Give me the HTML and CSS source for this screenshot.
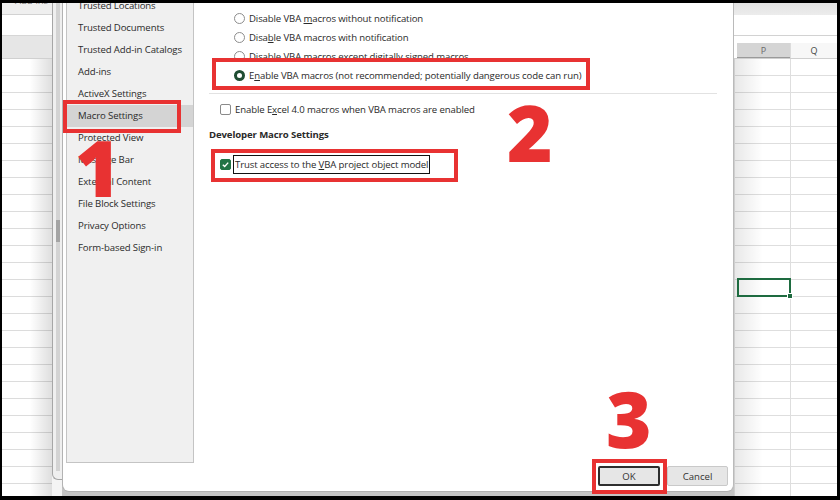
FILE: index.html
```html
<!DOCTYPE html>
<html lang="en">
<head>
    <meta charset="UTF-8">
    <title>Trust Center - Macro Settings</title>
    <link rel="stylesheet" href="styles.css">
</head>
<body>
    <div class="screen">
        <!-- worksheet left of the dialogs -->
        <div class="sheet sheet-left">
            <div class="ribbon-tail"><span>Add-ins</span></div>
            <div class="band-white"></div>
            <div class="band-gray"></div>
            <div class="rows rows-left"></div>
        </div>

        <!-- edge of Excel Options behind Trust Center -->
        <div class="options-back">
            <div class="options-panel">
                <div class="scroll"><div class="thumb"></div></div>
            </div>
        </div>

        <div class="dialog-col">
            <div class="dialog">
                <div class="dlg-body">
                    <ul class="nav">
                        <li>Trusted Locations</li>
                        <li>Trusted Documents</li>
                        <li>Trusted Add-in Catalogs</li>
                        <li>Add-ins</li>
                        <li>ActiveX Settings</li>
                        <li class="active">Macro Settings</li>
                        <li>Protected View</li>
                        <li>Message Bar</li>
                        <li>External Content</li>
                        <li>File Block Settings</li>
                        <li>Privacy Options</li>
                        <li>Form-based Sign-in</li>
                    </ul>
                    <div class="pane">
                        <div class="radios">
                            <div class="opt"><span class="radio"></span><span>Disable VBA <u>m</u>acros without notification</span></div>
                            <div class="opt"><span class="radio"></span><span>Disa<u>b</u>le VBA macros with notification</span></div>
                            <div class="opt"><span class="radio"></span><span>Disable VBA macros except digitally signed macros</span></div>
                            <div class="opt"><span class="radio checked"></span><span>E<u>n</u>able VBA macros (not recommended; potentially dangerous code can run)</span></div>
                        </div>
                        <div class="sep"></div>
                        <div class="opt check-row"><span class="box"></span><span>Enable E<u>x</u>cel 4.0 macros when VBA macros are enabled</span></div>
                        <div class="heading">Developer Macro Settings</div>
                        <div class="opt check-row trust-row">
                            <span class="box on">
                                <svg viewBox="0 0 10 10" width="9" height="9"><path d="M2 5.2 L4.1 7.2 L8 2.9" fill="none" stroke="#fff" stroke-width="1.5"/></svg>
                            </span>
                            <span class="focus">Trust access to the <u>V</u>BA project object model</span>
                        </div>
                    </div>
                </div>
                <div class="dlg-foot">
                    <button class="btn btn-default">OK</button>
                    <button class="btn">Cancel</button>
                </div>
            </div>
        </div>

        <!-- worksheet right of the dialogs -->
        <div class="sheet sheet-right">
            <div class="rs-top"></div>
            <div class="rs-formula"></div>
            <div class="rs-head">
                <span class="col-p">P</span>
                <span class="col-q">Q</span>
            </div>
            <div class="rows rows-right">
                <div class="cell-sel"></div>
            </div>
        </div>

        <!-- step markers -->
        <div class="mark mark-nav"></div>
        <div class="mark mark-enable"></div>
        <div class="mark mark-trust"></div>
        <div class="mark mark-ok"></div>
        <span class="step step-1">1</span>
        <span class="step step-2">2</span>
        <span class="step step-3">3</span>
    </div>
</body>
</html>
```

FILE: styles.css
```css
/* Page frame */
body {
    margin: 0;
    width: 840px;
    height: 500px;
    background: #000;
    padding: 3px 3px 4px 2px;
    box-sizing: border-box;
    font-family: "Open Sans", "Noto Sans", sans-serif;
    font-size: 9.6px;
    letter-spacing: -0.12px;
    color: #2a2a2a;
    overflow: hidden;
}
.screen {
    position: relative;
    display: flex;
    width: 835px;
    height: 493px;
    background: #fff;
    overflow: hidden;
}

/* Worksheet pieces */
.sheet {
    display: flex;
    flex-direction: column;
}
.sheet-left {
    width: 50px;
}
.ribbon-tail {
    height: 11px;
    background: #efefef;
    border-bottom: 1px solid #d2d2d2;
    overflow: hidden;
}
.ribbon-tail span {
    display: block;
    margin: -9px 0 0 13px;
    color: #777;
}
.band-white {
    height: 20px;
}
.band-gray {
    height: 22px;
    background: #e6e6e6;
    border-top: 1px solid #d6d6d6;
    border-bottom: 1px solid #d0d0d0;
}
.rows {
    position: relative;
    flex: 1;
    background: repeating-linear-gradient(to bottom, transparent 0 16px, #dcdcdc 16px 17px);
}
.rows-left {
    background:
        linear-gradient(to right, rgba(0, 0, 0, 0) 55%, rgba(0, 0, 0, 0.13)),
        repeating-linear-gradient(to bottom, transparent 0 16px, #dcdcdc 16px 17px);
}

.options-back {
    width: 10px;
    background: #f4f4f4;
}
.options-panel {
    height: 477px;
    box-sizing: border-box;
    background: #efefef;
    border-left: 1px solid #a6a6a6;
    border-bottom: 1px solid #a6a6a6;
    border-bottom-left-radius: 6px;
    padding: 0 0 8px 3px;
    display: flex;
}
.scroll {
    width: 4px;
    background: #d3d3d3;
    position: relative;
}
.thumb {
    position: absolute;
    top: 217px;
    left: 0;
    width: 4px;
    height: 22px;
    background: #a4a4a4;
}

/* Trust Center dialog */
.dialog-col {
    width: 672px;
    background: #c4c4c4;
}
.dialog {
    height: 489px;
    box-sizing: border-box;
    background: #fff;
    border-left: 1px solid #b3b3b3;
    border-right: 1px solid #bababa;
    border-bottom: 1px solid #b0b0b0;
    border-radius: 0 0 7px 7px;
    display: flex;
    flex-direction: column;
    overflow: hidden;
}
.dlg-body {
    display: flex;
    height: 460px;
    padding-left: 3px;
}
.nav {
    list-style: none;
    margin: -20px 0 0;
    padding: 11px 0 0;
    width: 128px;
    height: 480px;
    box-sizing: border-box;
    background: #f0f0f0;
    border: 1px solid #c4c4c4;
}
.nav li {
    height: 22px;
    line-height: 22px;
    padding-left: 11px;
    white-space: nowrap;
}
.nav li.active {
    background: #d4d4d4;
}
.pane {
    flex: 1;
    padding: 6px 0 0 15px;
}
.opt {
    display: flex;
    align-items: center;
    height: 19px;
    white-space: nowrap;
}
.radios {
    margin-left: 25px;
}
.radio {
    width: 11px;
    height: 11px;
    box-sizing: border-box;
    border: 1px solid #8d8d8d;
    border-radius: 50%;
    margin-right: 4px;
    background: #fff;
}
.radio.checked {
    border: 3px solid #1f4d33;
}
.sep {
    margin: 8px 16px 0 0;
    border-top: 1px solid #e2e2e2;
}
.check-row {
    height: 18px;
    margin: 6px 0 0 11px;
}
.box {
    width: 11px;
    height: 11px;
    box-sizing: border-box;
    border: 1px solid #8a8a8a;
    border-radius: 2px;
    margin-right: 4px;
    display: flex;
    align-items: center;
    justify-content: center;
}
.box.on {
    background: #217346;
    border-color: #217346;
    margin-right: 2px;
}
.heading {
    margin-top: 8px;
    height: 18px;
    line-height: 18px;
    font-weight: 700;
}
.trust-row {
    height: 19px;
    margin-top: 11px;
}
.focus {
    border: 1px solid #111;
    height: 19px;
    box-sizing: border-box;
    line-height: 17px;
    padding: 0 1px;
}
.dlg-foot {
    flex: 1;
    display: flex;
    justify-content: flex-end;
    gap: 7px;
    padding: 3px 5px 0 0;
}
.btn {
    width: 61px;
    height: 20px;
    background: #e6e6e6;
    border: 1px solid #c9c9c9;
    border-radius: 2px;
    font: inherit;
    color: #333;
    padding: 0;
}
.btn-default {
    width: 62px;
    border: 2px solid #2e2e2e;
}

/* Right worksheet */
.sheet-right {
    flex: 1;
}
.rs-top {
    height: 12px;
    background: linear-gradient(to bottom, #e2e2e2, #ececec);
}
.rs-formula {
    height: 20px;
    border-bottom: 1px solid #d2d2d2;
    margin-bottom: 7px;
}
.rs-head {
    display: flex;
    height: 15px;
    padding-left: 3px;
    border-bottom: 1px solid #cfcfcf;
    font-size: 9px;
}
.rs-head span {
    display: flex;
    align-items: center;
    justify-content: center;
}
.col-p {
    width: 53px;
    background: #d5d5d5;
    color: #6b6b6b;
    border-bottom: 1px solid #9a9a9a;
}
.col-q {
    flex: 1;
    background: #f7f7f7;
    border-left: 1px solid #dcdcdc;
    color: #444;
}
.rows-right {
    border-left: 1px solid #cfcfcf;
    background:
        linear-gradient(to right, rgba(0, 0, 0, 0.09), rgba(0, 0, 0, 0) 28px),
        linear-gradient(to right, transparent 55px, #dedede 55px 56px, transparent 56px),
        repeating-linear-gradient(to bottom, transparent 0 16px, #dedede 16px 17px);
}
.cell-sel {
    position: absolute;
    top: 219px;
    left: 2px;
    width: 54px;
    height: 19px;
    box-sizing: border-box;
    border: 2px solid #1e6b40;
}
.cell-sel::after {
    content: "";
    position: absolute;
    right: -4px;
    bottom: -4px;
    width: 4px;
    height: 4px;
    background: #1e6b40;
    border: 1px solid #fff;
}

/* Step markers */
.mark {
    position: absolute;
    border: 4px solid #e83232;
    box-sizing: border-box;
}
.mark-nav {
    left: 61px;
    top: 97px;
    width: 118px;
    height: 33px;
}
.mark-enable {
    left: 210px;
    top: 55px;
    width: 378px;
    height: 32px;
}
.mark-trust {
    left: 209px;
    top: 146px;
    width: 247px;
    height: 33px;
}
.mark-ok {
    left: 590px;
    top: 456px;
    width: 75px;
    height: 35px;
}
.step {
    position: absolute;
    font-family: "Open Sans", sans-serif;
    font-weight: 800;
    font-size: 78px;
    line-height: 1;
    letter-spacing: 0;
    color: #e83232;
}
.step-1 {
    left: 73px;
    top: 125px;
}
.step-2 {
    left: 505px;
    top: 90px;
}
.step-3 {
    left: 604px;
    top: 376px;
}
```
